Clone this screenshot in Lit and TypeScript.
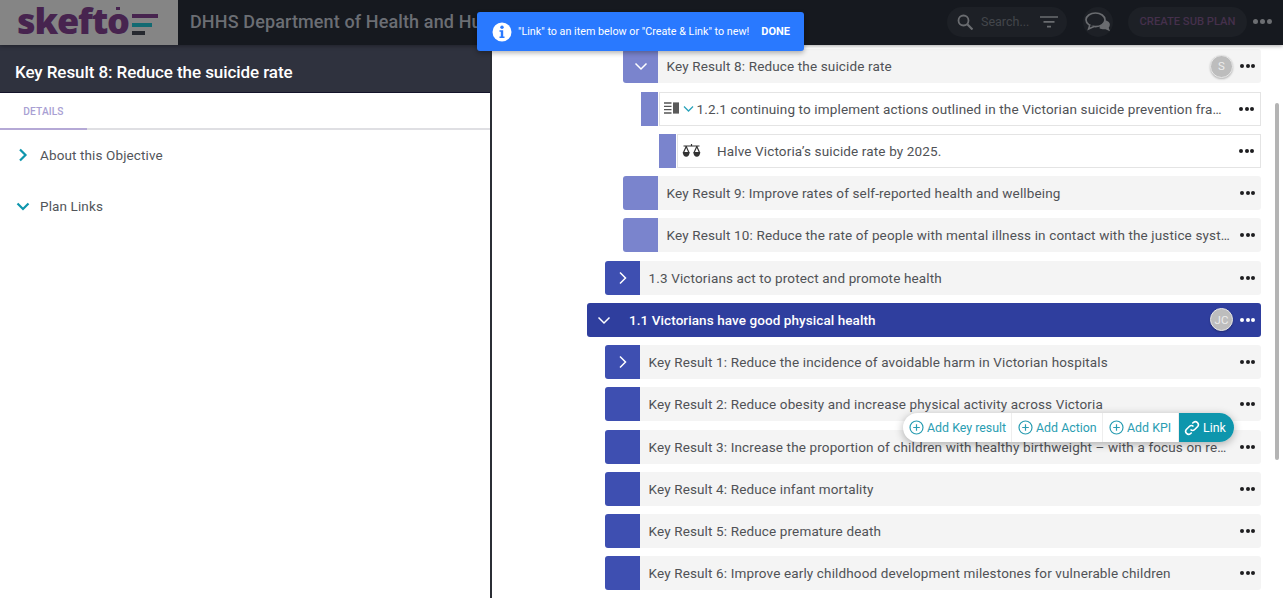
import { LitElement, html, css } from "lit";
import { customElement } from "lit/decorators.js";

const chevR = html`<svg class="chev" width="16" height="16" viewBox="0 0 16 16"><path d="M5 2.500 10.500 8 5 13.500" fill="none" stroke="currentColor" stroke-width="1.500"/></svg>`;
const chevD = html`<svg class="chev" width="16" height="16" viewBox="0 0 16 16"><path d="M2.500 5.500 8 11l5.500-5.500" fill="none" stroke="currentColor" stroke-width="1.500"/></svg>`;
const dots = html`<span class="dots"><i></i><i></i><i></i></span>`;
const plus = html`<svg width="15" height="15" viewBox="0 0 15 15"><circle cx="7.500" cy="7.500" r="6.500" fill="none" stroke="currentColor" stroke-width="1.200"/><path d="M7.500 4.200v6.600M4.200 7.500h6.600" stroke="currentColor" stroke-width="1.200"/></svg>`;

type Row = { text: string; level: number; kind?: string; chev?: "r" | "d"; avatar?: string };

const rows: Row[] = [
  { text: "Key Result 8: Reduce the suicide rate", level: 2, chev: "d", avatar: "S" },
  { text: "1.2.1 continuing to implement actions outlined in the Victorian suicide prevention framework and the Victorian suicide prevention", level: 3, kind: "action" },
  { text: "Halve Victoria’s suicide rate by 2025.", level: 4, kind: "kpi" },
  { text: "Key Result 9: Improve rates of self-reported health and wellbeing", level: 2 },
  { text: "Key Result 10: Reduce the rate of people with mental illness in contact with the justice system and the", level: 2 },
  { text: "1.3 Victorians act to protect and promote health", level: 1, chev: "r" },
  { text: "1.1 Victorians have good physical health", level: 0, kind: "top", chev: "d", avatar: "JC" },
  { text: "Key Result 1: Reduce the incidence of avoidable harm in Victorian hospitals", level: 1, chev: "r" },
  { text: "Key Result 2: Reduce obesity and increase physical activity across Victoria", level: 1 },
  { text: "Key Result 3: Increase the proportion of children with healthy birthweight – with a focus on reducing the", level: 1 },
  { text: "Key Result 4: Reduce infant mortality", level: 1 },
  { text: "Key Result 5: Reduce premature death", level: 1 },
  { text: "Key Result 6: Improve early childhood development milestones for vulnerable children", level: 1 },
];

@customElement("app-root")
export class AppRoot extends LitElement {
  static styles = css`
    :host { display: block; width: 1283px; height: 598px; overflow: hidden; position: relative; background: #fff; font-family: Roboto, "Liberation Sans", sans-serif; color: #505256; }
    * { box-sizing: border-box; }
    .header { height: 45px; padding-bottom: 2px; background: #16191f; display: flex; align-items: center; position: relative; z-index: 2; box-shadow: 0 1px 4px rgba(0,0,0,.35); }
    .logo { width: 178px; height: 45px; align-self: flex-start; background: #858585; display: flex; align-items: center; padding-left: 17px; flex: none; position: relative; }
    .logo-text { font-family: "Open Sans", Lato, sans-serif; font-weight: 800; font-size: 36px; letter-spacing: -1.2px; color: #47244f; line-height: 41px; height: 45px; }
    .logo-dot { position: absolute; left: 116px; top: 7px; width: 4px; height: 3px; background: #47244f; }
    .logo-bars { display: flex; flex-direction: column; gap: 4.5px; margin-left: 3px; margin-top: 4px; }
    .logo-bars i { display: block; height: 4px; }
    .plan { flex: 1; font-size: 18px; font-weight: 500; color: #6b6e74; padding-left: 12px; white-space: nowrap; overflow: hidden; letter-spacing: .12px; }
    .search { width: 120px; height: 30px; border-radius: 15px; background: #1d2026; display: flex; align-items: center; padding-left: 10px; font-size: 12.5px; color: #43464b; margin-right: 16px; }
    .search .ph { width: 59px; margin-left: 8px; }
    .chat { width: 30px; height: 30px; border-radius: 15px; background: #1d2026; display: flex; align-items: center; justify-content: center; margin-right: 15px; }
    .sub { width: 119px; height: 30px; border-radius: 15px; background: #1d2026; color: #45304c; font-size: 11.2px; font-weight: 500; display: flex; align-items: center; justify-content: center; margin-right: 6px; white-space: nowrap; }
    .header .hdots { width: auto; gap: 2px; }
    .header .hdots i { background: #6c6e72; width: 5px; height: 5px; }
    .hbox { display: flex; align-items: center; flex: none; margin-right: 11px; }

    .body { display: flex; height: 553px; }
    .left { width: 492px; flex: none; border-right: 2px solid #2b2e35; display: flex; flex-direction: column; }
    .title { height: 48px; background: #2f323e; color: #fff; font-size: 17px; font-weight: 500; letter-spacing: -.08px; display: flex; align-items: center; padding: 7px 0 0 15px; border-bottom: 1px solid #14142a; }
    .tabs { height: 37px; border-bottom: 2px solid #dfdfe3; display: flex; }
    .tab { width: 87px; height: 37px; border-bottom: 2px solid #b5a9d6; font-size: 10.2px; font-weight: 500; color: #a99fd3; letter-spacing: .1px; display: flex; align-items: center; justify-content: center; padding-top: 1px; }
    .acc { display: flex; align-items: center; height: 20px; font-size: 13.5px; color: #52555a; letter-spacing: .12px; gap: 9px; padding-left: 15px; }
    .acc svg { color: #0e96ad; }
    .acc path { stroke-width: 2.2; }
    .accs { display: flex; flex-direction: column; gap: 31px; padding-top: 15px; }

    .right { flex: 1; position: relative; overflow: hidden; padding: 4.3px 22px 0 95px; display: flex; flex-direction: column; gap: 8.25px; }
    .row { height: 34px; flex: none; display: flex; align-items: stretch; font-size: 13.5px; letter-spacing: .14px; }
    .l0 { margin-left: 0; }
    .l1 { margin-left: 18px; }
    .l2 { margin-left: 36px; }
    .l3 { margin-left: 54px; }
    .l4 { margin-left: 72px; }
    .btn { width: 35px; flex: none; background: #3e4fb1; color: #fff; border-radius: 3px 0 0 3px; display: flex; align-items: center; justify-content: center; }
    .l2 .btn { background: #7a84cd; }
    .l3 .btn, .l4 .btn { width: 17px; background: #7a84cd; border-radius: 0; }
    .main { flex: 1; min-width: 0; background: #f4f4f4; display: flex; align-items: center; padding: 0 5px 0 8.5px; border-radius: 0 3px 3px 0; gap: 6px; }
    .l3 .main, .l4 .main { background: #fff; border: 1px solid #e4e4e4; margin-left: 1px; border-radius: 0; }
    .text { flex: 1; min-width: 0; white-space: nowrap; overflow: hidden; text-overflow: ellipsis; padding-right: 2px; }
    .l3 .text { padding-right: 9px; }
    .top { background: #2f3e9e; border-radius: 3px; color: #fff; }
    .top .tw { width: 33px; flex: none; display: flex; align-items: center; justify-content: center; }
    .top .main { background: transparent; padding-left: 9px; }
    .top .text { font-weight: 500; color: #fff; letter-spacing: .08px; }
    .top .dots i { background: #fff; }
    .avatar { width: 23px; height: 23px; border-radius: 50%; background: #bdbdbd; border: 1.5px solid #e8e8e8; color: #ececec; font-size: 11.5px; display: flex; align-items: center; justify-content: center; box-shadow: 0 1px 2px rgba(0,0,0,.25); flex: none; margin-right: 1px; letter-spacing: 0; }
    .dots { display: inline-flex; gap: 1.5px; flex: none; width: 16px; }
    .dots i { display: block; width: 4px; height: 4px; border-radius: 50%; background: #1d1d1f; }
    .act-ic { display: flex; align-items: center; margin-left: -5px; flex: none; color: #2ba3bb; }
    .act-ic svg { display: block; }
    .chev2 { margin-left: 4px; }
    .kpi-ic { margin-left: -4.5px; margin-right: 10px; flex: none; display: block; }
    .l3 .main { gap: 3px; }

    .toast { position: absolute; left: 477px; top: 12px; width: 327px; height: 39px; background: #2979ff; border-radius: 3px; color: #fff; display: flex; align-items: center; padding-left: 15px; z-index: 5; font-size: 10.78px; box-shadow: 0 2px 5px rgba(0,0,0,.3); white-space: nowrap; }
    .toast b { font-weight: 700; margin-left: 12px; font-size: 11px; }
    .toast svg { margin-right: 6px; }
    .popup { position: absolute; left: 903px; top: 413px; height: 29px; width: 331px; border-radius: 15px; background: #fff; box-shadow: 0 2px 8px rgba(0,0,0,.3); display: flex; align-items: stretch; color: #2a9db2; font-size: 12.4px; z-index: 3; overflow: hidden; white-space: nowrap; }
    .popup div { display: flex; align-items: center; gap: 3px; padding-left: 6px; border-right: 1px solid #eee; }
    .popup .a { width: 109px; } .popup .b { width: 91px; } .popup .c { width: 76px; }
    .popup .link { background: #0e96ad; color: #fff; flex: 1; border: 0; padding-left: 5px; }
    .scroll { position: absolute; left: 1275px; top: 103px; width: 4px; height: 357px; border-radius: 2px; background: #b4b4b4; z-index: 1; }
  `;

  private rowView(r: Row) {
    const chev = r.chev === "r" ? chevR : r.chev === "d" ? chevD : "";
    if (r.kind === "top") {
      return html`<div class="row top l0"><div class="tw">${chev}</div><div class="main"><span class="text">${r.text}</span><span class="avatar">${r.avatar}</span>${dots}</div></div>`;
    }
    return html`<div class="row l${r.level}">
      <div class="btn">${chev}</div>
      <div class="main">
        ${r.kind === "action" ? html`<span class="act-ic">
          <svg width="15" height="13" viewBox="0 0 15 13"><path d="M0 1h7.500M0 4.300h7.500M0 7.600h7.500M0 11h7.500" stroke="#555" stroke-width="1.300"/><rect x="9" y=".4" width="6" height="11.200" fill="#5a5a5a"/></svg>
          <svg class="chev2" width="11" height="11" viewBox="0 0 11 11"><path d="M1 3.500 5.500 8 10 3.500" fill="none" stroke="currentColor" stroke-width="1.300"/></svg></span>` : ""}
        ${r.kind === "kpi" ? html`<svg class="kpi-ic" width="19" height="14" viewBox="0 0 19 14"><path d="M9.500 0v2M1.500 2h16M4.200 2.500 1.500 8.500M4.200 2.500l2.700 6M14.800 2.500l-2.700 6M14.800 2.500l2.700 6" fill="none" stroke="#333" stroke-width="1.200"/><path d="M.7 8h7a3.500 4.800 0 0 1-7 0ZM11.300 8h7a3.500 4.800 0 0 1-7 0Z" fill="#333"/></svg>` : ""}
        <span class="text">${r.text}</span>
        ${r.avatar ? html`<span class="avatar">${r.avatar}</span>` : ""}
        ${dots}
      </div>
    </div>`;
  }

  render() {
    return html`
      <div class="header">
        <div class="logo">
          <span class="logo-text">skefto</span>
          <span class="logo-dot"></span>
          <span class="logo-bars"><i style="width:26px;background:#47244f"></i><i style="width:20px;background:#126a72"></i><i style="width:13px;background:#26292f"></i></span>
        </div>
        <div class="plan">DHHS Department of Health and Human Services</div>
        <div class="search">
          <svg width="16" height="16" viewBox="0 0 16 16"><circle cx="6.500" cy="6.500" r="5" fill="none" stroke="#6a6c70" stroke-width="1.800"/><path d="M10.300 10.300 15.500 15.500" stroke="#6a6c70" stroke-width="2.200"/></svg>
          <span class="ph">Search...</span>
          <svg width="18" height="12" viewBox="0 0 18 12"><path d="M0 1h18M3.500 5.800h11M7 10.600h4" stroke="#6a6c70" stroke-width="1.700"/></svg>
        </div>
        <div class="chat">
          <svg width="26" height="20" viewBox="0 0 26 20"><path d="M16 8.500c3.500-1.500 7 .2 8.500 2.500.8 1.800.2 3.600-.8 4.700l1.300 3.500-4.500-2c-2 .3-4.500 0-6-1Z" fill="#6a6c70"/><ellipse cx="10.500" cy="7.800" rx="9.500" ry="6.800" fill="#1d2026" stroke="#6a6c70" stroke-width="1.700"/><path d="M5 12.500 3.500 17l5.500-2.500" fill="#1d2026" stroke="#6a6c70" stroke-width="1.500"/></svg>
        </div>
        <div class="sub">CREATE SUB PLAN</div>
        <div class="hbox"><span class="dots hdots"><i></i><i></i><i></i></span></div>
      </div>
      <div class="body">
        <div class="left">
          <div class="title">Key Result 8: Reduce the suicide rate</div>
          <div class="tabs"><div class="tab">DETAILS</div></div>
          <div class="accs">
            <div class="acc">${chevR}<span>About this Objective</span></div>
            <div class="acc">${chevD}<span>Plan Links</span></div>
          </div>
        </div>
        <div class="right">${rows.map((r) => this.rowView(r))}</div>
      </div>
      <div class="toast">
        <svg width="20" height="20" viewBox="0 0 20 20"><circle cx="10" cy="10" r="9.500" fill="#fff"/><circle cx="10" cy="5.200" r="1.700" fill="#2979ff"/><path d="M7.500 8.300h3.700v6.200h1.300v1.500H7.500v-1.500h1.300V9.800H7.500Z" fill="#2979ff"/></svg>
        <span>"Link" to an item below or "Create &amp; Link" to new!</span>
        <b>DONE</b>
      </div>
      <div class="popup">
        <div class="a">${plus}Add Key result</div>
        <div class="b">${plus}Add Action</div>
        <div class="c">${plus}Add KPI</div>
        <div class="link"><svg width="16" height="16" viewBox="0 0 16 16" fill="none" stroke="#fff" stroke-width="1.600"><path d="M6.500 9.500a3 3 0 0 0 4.200 0l3-3a3 3 0 0 0-4.200-4.200L8.300 3.500"/><path d="M9.500 6.500a3 3 0 0 0-4.200 0l-3 3a3 3 0 0 0 4.200 4.200l1.200-1.200"/></svg>Link</div>
      </div>
      <div class="scroll"></div>
    `;
  }
}
